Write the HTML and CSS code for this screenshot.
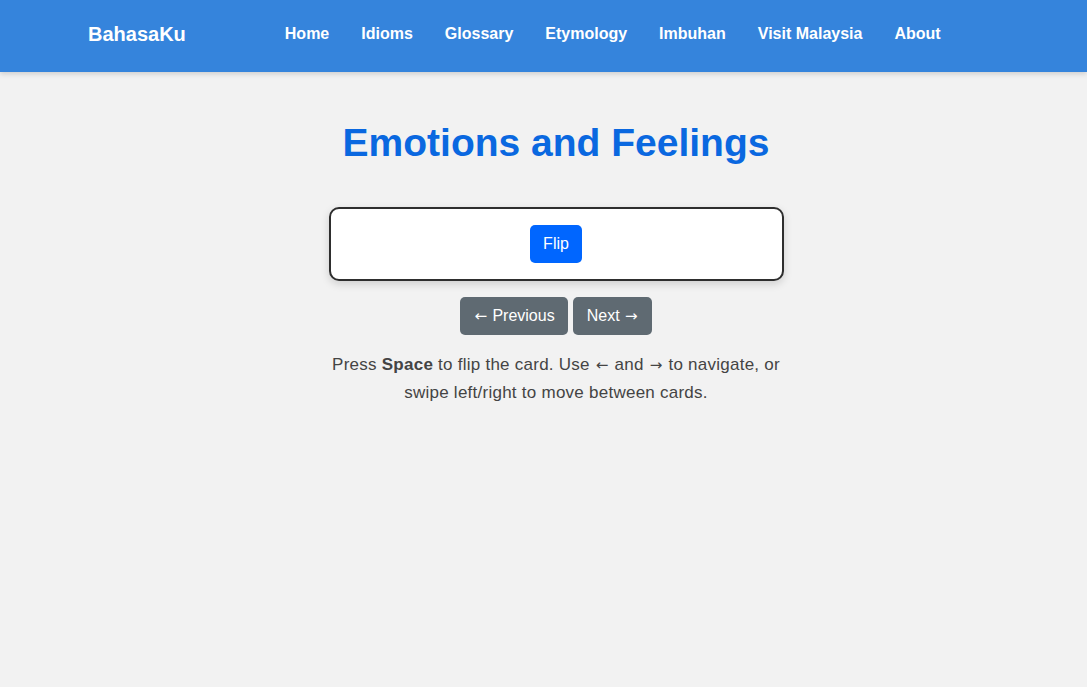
FILE: index.html
```html
<!DOCTYPE html>
<html lang="en">
<head>
<meta charset="utf-8">
<title>BahasaKu – Emotions and Feelings</title>
<link rel="stylesheet" href="styles.css">
</head>
<body>
<header class="site-header">
  <div class="header-inner">
    <a class="brand" href="#">BahasaKu</a>
    <nav class="nav">
      <a href="#">Home</a>
      <a href="#">Idioms</a>
      <a href="#">Glossary</a>
      <a href="#">Etymology</a>
      <a href="#">Imbuhan</a>
      <a href="#">Visit Malaysia</a>
      <a href="#">About</a>
    </nav>
  </div>
</header>
<main class="main">
  <h1 class="title">Emotions and Feelings</h1>
  <div class="card">
    <button class="btn-flip">Flip</button>
  </div>
  <div class="controls">
    <button class="btn-nav"><span class="arrow">&larr;</span> Previous</button>
    <button class="btn-nav">Next <span class="arrow">&rarr;</span></button>
  </div>
  <p class="hint">Press <strong>Space</strong> to flip the card. Use <span class="arrow">&larr;</span> and <span class="arrow">&rarr;</span> to navigate, or swipe left/right to move between cards.</p>
</main>
</body>
</html>
```
FILE: styles.css
```css
* { box-sizing: border-box; }
html, body { margin: 0; padding: 0; }
body {
  background: #f2f2f2;
  font-family: "Liberation Sans", Arial, Helvetica, sans-serif;
  color: #444;
}
.site-header {
  background: #3584dc;
  height: 72px;
  box-shadow: 0 2px 5px rgba(0,0,0,0.15);
}
.header-inner {
  display: flex;
  align-items: center;
  height: 72px;
  padding-left: 88px;
  padding-bottom: 4px;
}
.brand {
  color: #fff;
  font-weight: bold;
  font-size: 20px;
  text-decoration: none;
  margin-right: 99px;
}
.nav {
  display: flex;
  gap: 32px;
}
.nav a {
  color: #fff;
  font-weight: bold;
  font-size: 16px;
  text-decoration: none;
}
.main {
  display: flex;
  flex-direction: column;
  align-items: center;
  padding-left: 25px;
}
.title {
  color: #0a68e0;
  font-size: 39px;
  font-weight: bold;
  line-height: 46px;
  margin: 48px 0 0;
}
.card {
  margin-top: 41px;
  width: 455px;
  height: 74px;
  background: #fff;
  border: 2px solid #2e2e2e;
  border-radius: 10px;
  box-shadow: 0 3px 8px rgba(0,0,0,0.15);
  display: flex;
  align-items: center;
  justify-content: center;
}
.btn-flip {
  background: #0066ff;
  color: #fff;
  border: none;
  border-radius: 5px;
  font-family: inherit;
  font-size: 16px;
  height: 38px;
  padding: 0 13px;
}
.controls {
  display: flex;
  gap: 5px;
  margin-top: 16px;
}
.btn-nav {
  background: #5f6a72;
  color: #fff;
  border: none;
  border-radius: 5px;
  font-family: inherit;
  font-size: 16px;
  height: 38px;
  padding: 0 13.5px;
}
.arrow {
  font-family: "DejaVu Sans", sans-serif;
  font-size: 15px;
  margin: 0 1px;
}
.hint {
  width: 456px;
  text-align: center;
  font-size: 17px;
  line-height: 28px;
  letter-spacing: 0.25px;
  margin: 16px 0 0;
  color: #444;
}
.hint .arrow { font-size: 15px; }
.hint strong { color: #444; }
```
